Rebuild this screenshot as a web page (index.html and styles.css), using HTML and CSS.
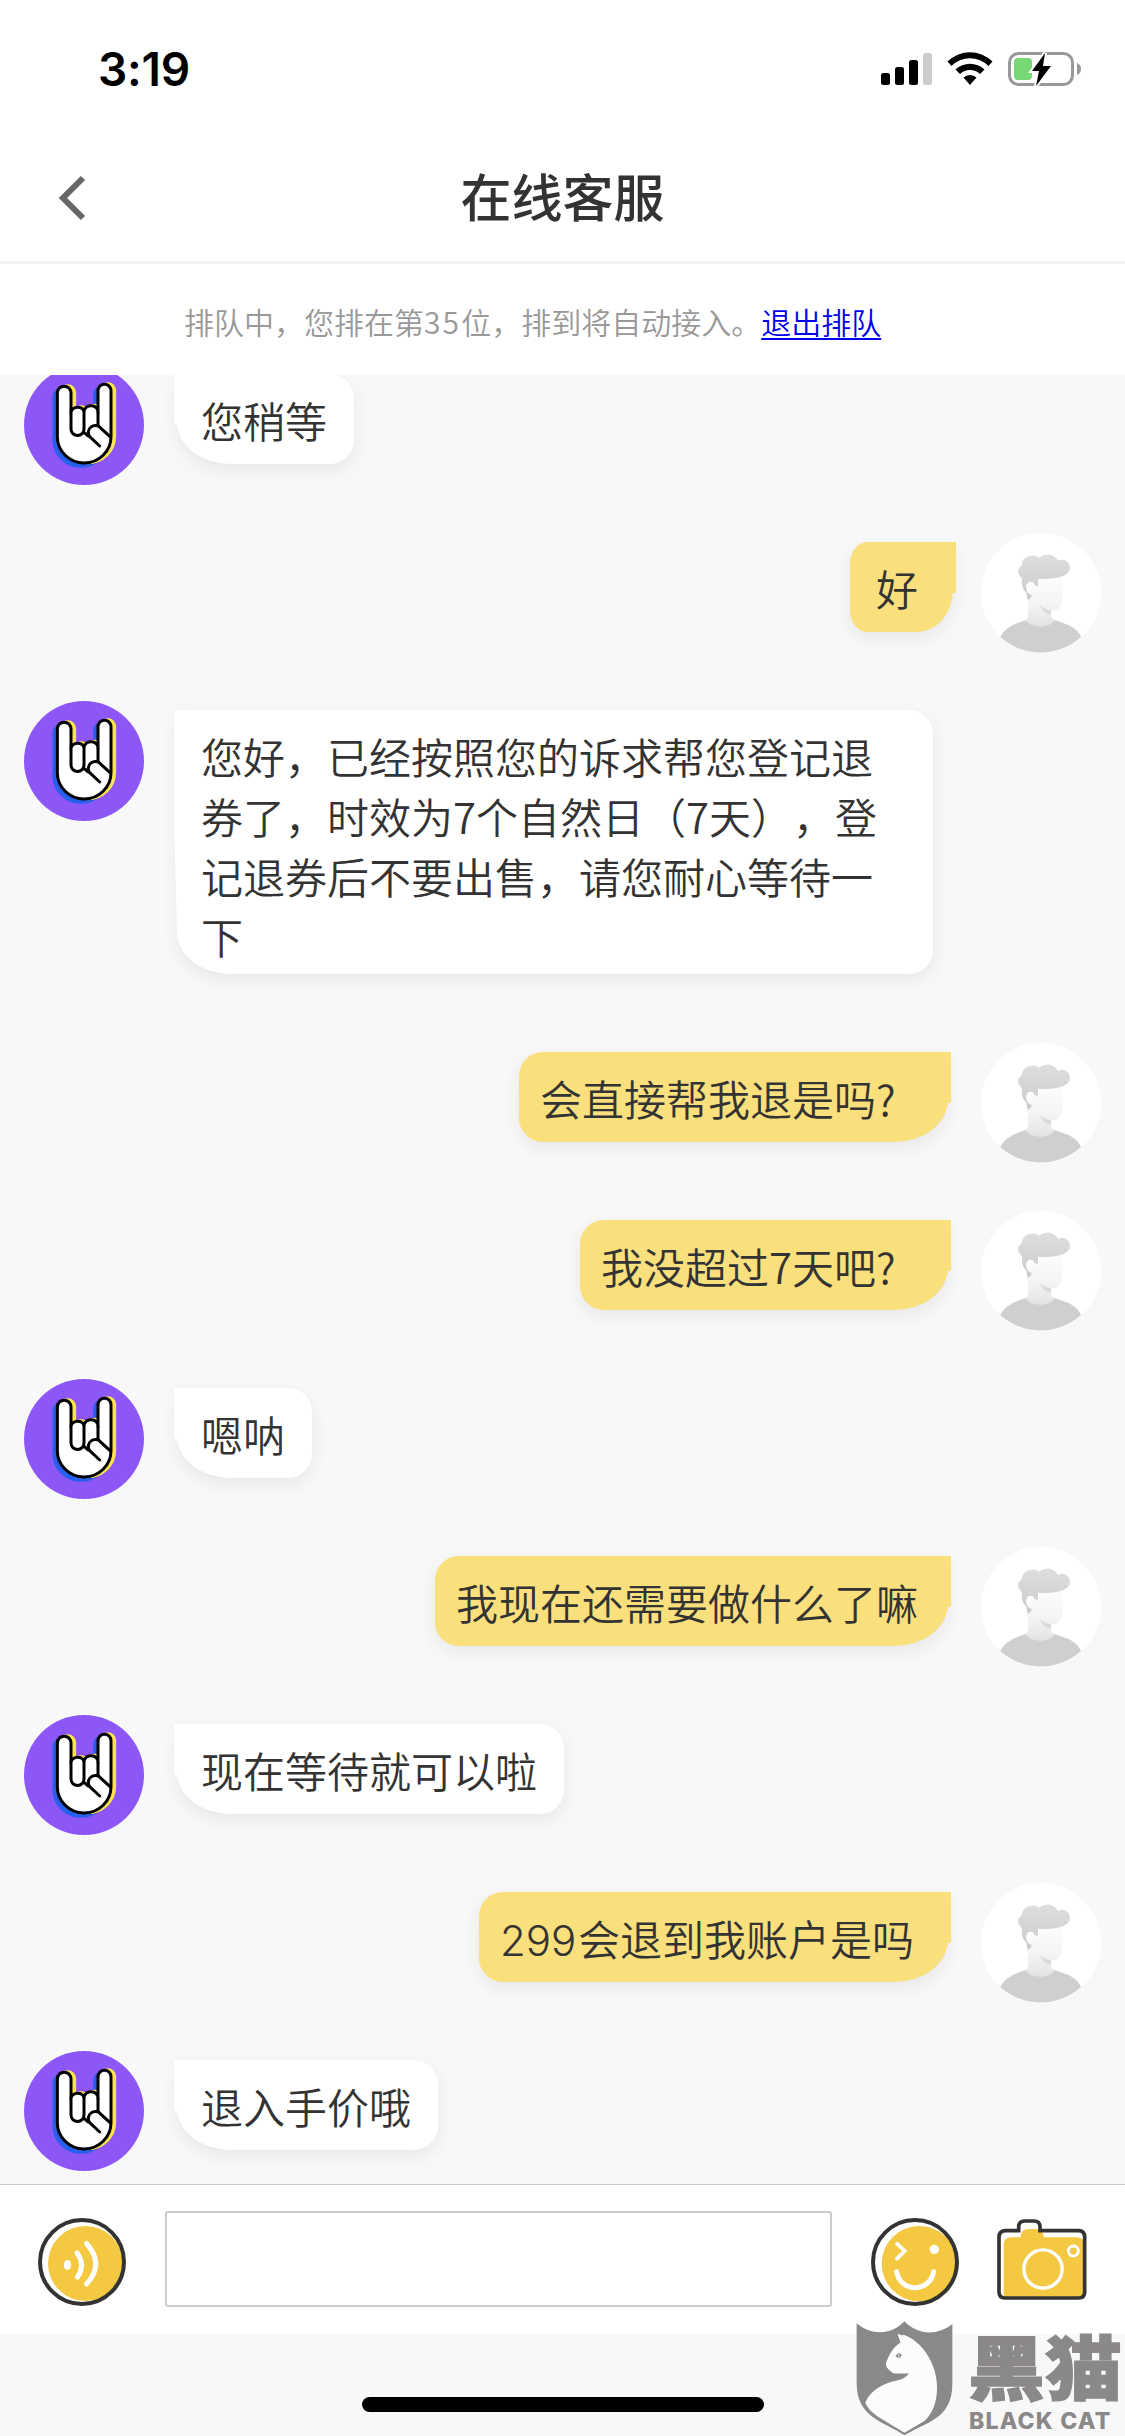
FILE: index.html
```html
<!DOCTYPE html>
<html lang="zh-CN">
<head>
<meta charset="utf-8">
<title>在线客服</title>
<link rel="stylesheet" href="styles.css">
</head>
<body>
<svg class="defs" aria-hidden="true">
  <defs>
    <linearGradient id="hair" x1="0" y1="0" x2="0" y2="1"><stop offset="0" stop-color="#dedede"/><stop offset="1" stop-color="#cbcbcb"/></linearGradient>
    <linearGradient id="skin" x1="0" y1="0" x2="0" y2="1"><stop offset="0" stop-color="#fcfcfc"/><stop offset="0.55" stop-color="#f4f4f4"/><stop offset="1" stop-color="#e2e2e2"/></linearGradient>
    <path id="fist" d="M112 87a20.5 20.5 0 0 1 41 0V146A20 18 0 0 1 192 142A20 18 0 0 1 234 146V80a19.500 19.500 0 0 1 39 0V218a80.500 79 0 0 1 -161 0Z"/>
    <symbol id="agent" viewBox="12 3 360 360">
      <circle cx="192" cy="183" r="180" fill="#8d56f7"/>
      <use href="#fist" x="-10" y="10" fill="#2860ee" stroke="#2860ee" stroke-width="9"/>
      <use href="#fist" x="11" y="-1" fill="#ffe54d" stroke="#ffe54d" stroke-width="9"/>
      <g fill="#fff" stroke="#000" stroke-width="9" stroke-linecap="round" stroke-linejoin="round">
        <use href="#fist"/>
        <path d="M153 144V195a19.500 19.500 0 0 0 39 0V144M192 205L205 216M234 146V184"/>
        <path d="M270 218L243 193A21 21 0 0 0 209 218L239 246"/>
      </g>
    </symbol>
    <symbol id="guest" viewBox="468 99 360 360">
      <circle cx="648" cy="279" r="180" fill="#fff"/>
      <path d="M526 411C540 382 570 370 603 360H687C720 370 758 382 768 411A180 180 0 0 1 526 411Z" fill="#cfcfcf"/>
      <path d="M609 280L638 235H712V285C712 312 706 331 682 331L678 332V346C679 354 684 358 689 360C674 387 618 387 602 361C607 358 609 353 609 346Z" fill="url(#skin)"/>
      <path d="M645 315C654 325 667 330 678 331V345C661 340 648 330 645 315Z" fill="#dadada"/>
      <path d="M591 234C576 225 576 203 591 196C589 171 620 160 644 173C662 157 688 163 699 182C723 172 741 194 733 213C720 235 674 239 639 236V258C631 258 627 254 624 247C610 241 602 253 604 266C607 279 614 284 621 285C618 293 613 299 608 300L604 278C594 270 588 254 591 234Z" fill="url(#hair)"/>
    </symbol>
  </defs>
</svg>
<div class="phone">
  <header class="status">
    <div class="time">3:19</div>
    <svg class="status-icons" viewBox="0 0 204 40">
      <rect x="1" y="23" width="9" height="12" rx="2.500"/><rect x="15" y="17" width="9" height="18" rx="2.500"/><rect x="29" y="10" width="9" height="25" rx="2.500"/><rect x="43" y="3" width="9" height="32" rx="2.500" fill="#ccc"/>
      <path d="M67.500 11.500A32 32 0 0 1 112.500 11.500L108.500 16A26 26 0 0 0 71.500 16ZM75.500 19.500A21 21 0 0 1 104.500 19.500L100 24A14.500 14.500 0 0 0 80 24ZM83.500 27.500A9.500 9.500 0 0 1 96.500 27.500L90 35Z"/>
      <rect x="129.500" y="3.500" width="63" height="31" rx="9" fill="none" stroke="#999" stroke-width="3"/>
      <path d="M197 13a6.500 6.500 0 0 1 0 12Z" fill="#999"/>
      <rect x="134" y="8" width="18" height="22" rx="4" fill="#78d775"/>
      <path d="M165 3L152 21H159L156 36L171 16H163Z" stroke="#fff" stroke-width="4"/>
      <path d="M165 3L152 21H159L156 36L171 16H163Z"/>
    </svg>
  </header>
  <nav class="title-bar">
    <svg class="back" viewBox="0 0 30 46"><path d="M25 3L5 23L25 43"/></svg>
    <h1>在线客服</h1>
  </nav>
  <div class="queue">排队中，您排在第<span class="num">35</span>位，排到将自动接入。<a href="#">退出排队</a></div>
  <main class="chat">
    <div class="messages">
      <div class="row"><svg class="avatar"><use href="#agent"/></svg><div class="bubble left">您稍等</div></div>
      <div class="row mine"><svg class="avatar"><use href="#guest"/></svg><div class="bubble right short">好</div></div>
      <div class="row"><svg class="avatar"><use href="#agent"/></svg><div class="bubble left long">您好，已经按照您的诉求帮您登记退<br>券了，时效为7个自然日（7天），登<br>记退券后不要出售，请您耐心等待一<br>下</div></div>
      <div class="row mine"><svg class="avatar"><use href="#guest"/></svg><div class="bubble right">会直接帮我退是吗<span class="mark">?</span></div></div>
      <div class="row mine"><svg class="avatar"><use href="#guest"/></svg><div class="bubble right">我没超过7天吧<span class="mark">?</span></div></div>
      <div class="row"><svg class="avatar"><use href="#agent"/></svg><div class="bubble left">嗯呐</div></div>
      <div class="row mine"><svg class="avatar"><use href="#guest"/></svg><div class="bubble right">我现在还需要做什么了嘛</div></div>
      <div class="row"><svg class="avatar"><use href="#agent"/></svg><div class="bubble left">现在等待就可以啦</div></div>
      <div class="row mine"><svg class="avatar"><use href="#guest"/></svg><div class="bubble right with-amount"><span class="amount">299</span>会退到我账户是吗</div></div>
      <div class="row"><svg class="avatar"><use href="#agent"/></svg><div class="bubble left">退入手价哦</div></div>
    </div>
  </main>
  <div class="composer">
    <svg class="voice" viewBox="0 0 88 88">
      <circle cx="47.500" cy="45.500" r="37.500" fill="#f5c842"/><circle cx="44" cy="44" r="42" fill="none" stroke="#333" stroke-width="4"/>
      <ellipse cx="29.500" cy="47" rx="3.700" ry="5" fill="#fff"/>
      <path d="M39 35Q48 47 39.500 59M48.500 25.500Q67 46 48.500 66" fill="none" stroke="#fff" stroke-width="5" stroke-linecap="round"/>
    </svg>
    <input class="field" type="text" aria-label="消息">
    <svg class="smile" viewBox="808 173 264 264">
      <circle cx="953" cy="310" r="113" fill="#f5c842"/><circle cx="940" cy="305" r="126" fill="none" stroke="#333" stroke-width="12"/>
      <circle cx="998" cy="267" r="14" fill="#fff"/>
      <path d="M886 250L909 272L886 295" fill="none" stroke="#fff" stroke-width="11" stroke-linecap="round"/>
      <path d="M885 334C895 398 984 398 996 334" fill="none" stroke="#fff" stroke-width="15" stroke-linecap="round"/>
    </svg>
    <svg class="camera" viewBox="1186 179 270 246">
      <path d="M1206 411V257Q1206 234 1229 234H1257Q1257 209 1281 209H1302Q1326 209 1326 234H1424Q1448 234 1448 257V418H1212Z" fill="#f5c842"/>
      <path d="M1192 234Q1192 214 1212 214H1251V203Q1251 185 1269 185H1297Q1315 185 1315 203V214H1431Q1449 214 1449 234V398Q1449 416 1431 416H1210Q1192 416 1192 398Z" fill="none" stroke="#333" stroke-width="11"/>
      <g fill="none" stroke="#fff"><circle cx="1324" cy="329" r="57.500" stroke-width="10"/><circle cx="1415" cy="275" r="15" stroke-width="9"/></g>
    </svg>
  </div>
  <footer class="home"><div class="indicator"></div></footer>
  <div class="watermark">
    <svg class="shield" viewBox="765 483 290 346">
      <path d="M766 490C810 527 870 527 910 484C950 527 1010 527 1054 492V670C1054 780 975 785 910 827C850 785 766 775 766 670Z" fill="#8b8889"/>
      <path d="M889 521L903 527L907 524C960 541 1008 609 1008 682C1008 725 995 760 971 783L910 819L829 770Q800 750 792 729C806 690 850 669 887 662Q912 657 923 641H878C868 634 853 625 854 610C864 584 877 560 898 548Z" fill="#fcfcfc"/>
      <path d="M883 588L892 578V596ZM895 578L902 586L893 596Z" fill="#8b8889"/>
    </svg>
    <div class="brand"><div class="brand-cn">黑猫</div><div class="brand-en">BLACK CAT</div></div>
  </div>
</div>
</body>
</html>
```
FILE: styles.css
```css
* { box-sizing: border-box; }
body { margin: 0; background: #f8f8f8; font-family: "Noto Sans CJK SC", sans-serif; color: #333; }
svg { display: block; }
.defs { position: absolute; width: 0; height: 0; }
.phone { position: relative; display: flex; flex-direction: column; width: 1125px; height: 2436px; overflow: hidden; }

.status { display: flex; justify-content: space-between; height: 132px; padding: 50px 41px 0 98px; background: #fff; color: #000; }
.time { font: 600 46px/38px Inter, sans-serif; letter-spacing: -0.2px; }
.status-icons { width: 204px; height: 40px; }

.title-bar { display: grid; grid-template-columns: 1fr auto 1fr; align-items: center; height: 132px; padding: 0 58px; background: #fff; border-bottom: 3px solid #f2f2f2; }
.back { width: 30px; height: 46px; margin-top: 2px; fill: none; stroke: #666; stroke-width: 6; }
h1 { margin: -4px 0 0; font-size: 51px; font-weight: 500; line-height: 60px; }

.queue { height: 111px; padding-left: 184px; background: #fff; color: #999; font-size: 30px; font-weight: 350; line-height: 115px; white-space: nowrap; }
.queue .num { letter-spacing: 2.1px; }
.queue a { color: #00e; text-decoration: underline; text-decoration-thickness: 2px; text-underline-offset: 4px; }

.chat { height: 1809px; overflow: hidden; }
.messages { margin-top: -10px; }
.row { display: flex; align-items: flex-start; gap: 30px; padding: 0 24px; }
.row.mine { flex-direction: row-reverse; }
.avatar { flex: none; width: 120px; height: 120px; }

.bubble { position: relative; margin: 9px 0 69px; min-height: 90px; padding: 16px 27px 8px 24px; font-size: 42px; font-weight: 350; line-height: 60px; white-space: nowrap; text-spacing-trim: space-all; box-shadow: 0 6px 18px rgba(0, 0, 0, 0.07); }
.left { margin-left: 3px; background: #fff; border-radius: 0 24px 24px 54px / 0 24px 24px 42px; }
.right { margin-right: 3px; padding: 16px 30px 8px 21px; background: #fadf7d; border-radius: 24px 0 54px 24px / 24px 0 42px 24px; }
.bubble::after { content: ""; position: absolute; top: 0; width: 4px; height: 51px; background: inherit; }
.left::after { left: -3px; }
.right::after { right: -3px; }
.long { width: 756px; }
.long::after { height: 222px; clip-path: polygon(0 0, 100% 0, 100% 100%, 75% 100%, 0 50%); }
.short { margin-right: -2px; padding: 16px 35px 8px 26px; border-radius: 17px 0 36px 17px / 22px 0 42px 22px; }
.mark { display: inline-block; width: 42px; line-height: 1; }
.with-amount { padding-right: 34px; }
.amount { display: inline-block; width: 78px; font-family: Inter, sans-serif; font-size: 42px; line-height: 1; }

.composer { display: flex; align-items: center; height: 150px; padding: 0 38px 2px; background: #fff; border-top: 1px solid #ccc; }
.voice, .smile { flex: none; width: 88px; height: 88px; margin-top: 6px; }
.field { width: 667px; height: 96px; margin: 0 39px; border: 2px solid #ccc; border-radius: 3px; background: #fff; outline: none; }
.camera { flex: none; width: 90px; height: 82px; margin-left: 38px; margin-top: 2px; }

.home { display: flex; justify-content: center; padding-top: 63px; }
.indicator { width: 402px; height: 15px; border-radius: 8px; background: #000; }

.watermark { position: absolute; left: 856px; top: 2321px; display: flex; gap: 15px; color: #8b8889; }
.shield { width: 97px; height: 115px; }
.brand { white-space: nowrap; }
.brand-cn { height: 84px; padding-top: 7px; font-size: 77px; font-weight: 900; line-height: 74px; transform: scaleY(0.92); -webkit-text-stroke: 1.5px #8b8889; }
.brand-en { padding-left: 1px; font: 800 23px/32px Inter, sans-serif; letter-spacing: 1.2px; }
```
